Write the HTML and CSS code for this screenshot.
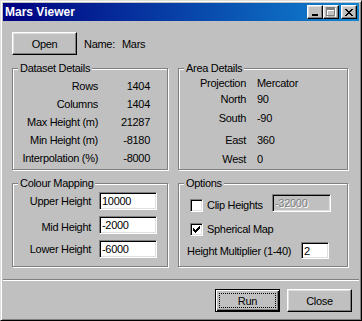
FILE: index.html
```html
<!DOCTYPE html>
<html lang="en">
<head>
  <meta charset="UTF-8">
  <title>Mars Viewer</title>
  <link rel="stylesheet" href="styles.css">
</head>
<body>

  <div class="window">

    <!-- Title bar -->
    <div class="titlebar">
      <span class="title">Mars Viewer</span>
      <div class="caption-buttons">
        <span class="cap-btn">
          <svg width="8" height="7" viewBox="0 0 8 7" shape-rendering="crispEdges"><rect x="1" y="5" width="6" height="2" fill="#000"/></svg>
        </span>
        <span class="cap-btn">
          <svg width="10" height="10" viewBox="0 0 10 10" shape-rendering="crispEdges">
            <path d="M1 1h9v10h-9z M2 4v6h7v-6z" fill="#fff" fill-rule="evenodd"/>
            <path d="M0 0h9v9h-9z M1 3v5h7v-5z" fill="#808080" fill-rule="evenodd"/>
          </svg>
        </span>
        <span class="cap-btn close">
          <svg width="8" height="7" viewBox="0 0 8 7" shape-rendering="crispEdges">
            <path d="M0 0h2v1h-2z M6 0h2v1h-2z M1 1h2v1h-2z M5 1h2v1h-2z M2 2h4v1h-4z M3 3h2v1h-2z M2 4h4v1h-4z M1 5h2v1h-2z M5 5h2v1h-2z M0 6h2v1h-2z M6 6h2v1h-2z" fill="#000"/>
          </svg>
        </span>
      </div>
    </div>

    <div class="content">

      <!-- Open / name -->
      <div class="top-row">
        <button class="btn">Open</button>
        <span class="name-label">Name:</span>
        <span>Mars</span>
      </div>

      <!-- Group boxes -->
      <div class="groups">
        <fieldset class="group tall">
          <legend>Dataset Details</legend>
          <div class="stats">
            <span>Rows</span><span>1404</span>
            <span>Columns</span><span>1404</span>
            <span>Max Height (m)</span><span>21287</span>
            <span>Min Height (m)</span><span>-8180</span>
            <span>Interpolation (%)</span><span>-8000</span>
          </div>
        </fieldset>

        <fieldset class="group tall">
          <legend>Area Details</legend>
          <div class="area">
            <span>Projection</span><span>Mercator</span>
            <span>North</span><span>90</span>
            <span>South</span><span>-90</span>
            <span>East</span><span>360</span>
            <span>West</span><span>0</span>
          </div>
        </fieldset>

        <fieldset class="group short">
          <legend>Colour Mapping</legend>
          <div class="mapping">
            <label>Upper Height</label><input class="edit" type="text" value="10000">
            <label class="mid">Mid Height</label><input class="edit" type="text" value="-2000">
            <label>Lower Height</label><input class="edit" type="text" value="-6000">
          </div>
        </fieldset>

        <fieldset class="group short">
          <legend>Options</legend>
          <div class="options">
            <div class="opt-row clip">
              <span class="check"></span>
              <span class="check-label">Clip Heights</span>
              <input class="edit clip-value" type="text" value="-32000" disabled>
            </div>
            <div class="opt-row spherical">
              <span class="check">
                <svg width="7" height="7" viewBox="0 0 7 7" shape-rendering="crispEdges">
                  <path d="M6 0h1v1h-1z M5 1h2v1h-2z M0 2h1v1h-1z M4 2h3v1h-3z M0 3h2v1h-2z M3 3h3v1h-3z M0 4h5v1h-5z M1 5h3v1h-3z M2 6h1v1h-1z" fill="#000"/>
                </svg>
              </span>
              <span class="check-label">Spherical Map</span>
            </div>
            <div class="opt-row multiplier">
              <span class="mult-label">Height Multiplier (1-40)</span>
              <input class="edit mult" type="text" value="2">
            </div>
          </div>
        </fieldset>
      </div>

      <div class="separator"></div>

      <!-- Dialog buttons -->
      <div class="actions">
        <button class="btn default"><span class="focus">Run</span></button>
        <button class="btn">Close</button>
      </div>

    </div>
  </div>

</body>
</html>
```

FILE: styles.css
```css
body {
  margin: 0;
  font-family: 'Liberation Sans', Arial, sans-serif;
  font-size: 11px;
  letter-spacing: -0.3px;
  background-color: #c0c0c0;
  color: #000;
}

.window {
  width: 362px;
  height: 321px;
  box-sizing: border-box;
  padding: 2px;
  border: 1px solid;
  border-color: #dfdfdf #000 #000 #dfdfdf;
  box-shadow: inset 1px 1px #fff, inset -1px -1px #808080;
  background-color: #c0c0c0;
}

/* title bar */

.titlebar {
  height: 18px;
  display: flex;
  align-items: center;
  justify-content: space-between;
  padding: 0 2px;
  background: linear-gradient(to right, #000080, #1084d0);
}

.title {
  color: #fff;
  font-weight: bold;
  font-size: 12px;
  letter-spacing: 0;
}

.caption-buttons {
  display: flex;
}

.cap-btn {
  width: 16px;
  height: 14px;
  box-sizing: border-box;
  display: flex;
  align-items: center;
  justify-content: center;
  background-color: #c0c0c0;
  border: 1px solid;
  border-color: #fff #000 #000 #fff;
  box-shadow: inset -1px -1px #808080, inset 1px 1px #dfdfdf;
}

.cap-btn svg {
  display: block;
}

.cap-btn.close {
  margin-left: 2px;
}

/* content */

.content {
  padding: 0 0 0 9px;
}

.top-row {
  display: flex;
  align-items: center;
  margin-top: 11px;
  height: 23px;
}

.btn {
  width: 65px;
  height: 23px;
  box-sizing: border-box;
  padding: 0;
  font-family: inherit;
  font-size: 11px;
  letter-spacing: inherit;
  color: #000;
  background-color: #c0c0c0;
  border: 1px solid;
  border-color: #fff #000 #000 #fff;
  box-shadow: inset -1px -1px #808080, inset 1px 1px #dfdfdf;
}

.btn.default {
  border-color: #000;
  box-shadow: inset 1px 1px #fff, inset -1px -1px #000, inset -2px -2px #808080;
  padding: 3px;
}

.btn .focus {
  display: flex;
  align-items: center;
  justify-content: center;
  height: 100%;
  box-sizing: border-box;
  border: 1px dotted #000;
}

.name-label {
  margin-left: 7px;
  width: 38px;
}

/* group boxes */

.groups {
  display: grid;
  grid-template-columns: 156px 170px;
  column-gap: 10px;
  row-gap: 7px;
  margin-top: 7px;
}

.group {
  margin: 0;
  padding: 0;
  min-width: 0;
  box-sizing: border-box;
  border: 1px solid #808080;
  box-shadow: inset 1px 1px #fff, 1px 1px #fff;
}

.group.tall {
  height: 108px;
}

.group.short {
  height: 90px;
}

.group legend {
  margin-left: 5px;
  padding: 0 2px;
  line-height: 13px;
  background-color: #c0c0c0;
}

.stats {
  display: grid;
  grid-template-columns: 85px 52px;
  grid-auto-rows: 18px;
  align-items: center;
  text-align: right;
  padding-top: 2px;
}

.area {
  display: grid;
  grid-template-columns: 67px auto;
  grid-template-rows: 16px 15px 24px 20px 18px;
  column-gap: 11px;
  align-items: center;
}

.area span:nth-child(odd) {
  text-align: right;
}

.mapping {
  display: grid;
  grid-template-columns: 78px 58px;
  grid-auto-rows: 18px;
  column-gap: 8px;
  row-gap: 6px;
  align-items: center;
  padding-top: 2px;
}

.mapping label {
  text-align: right;
}

.mapping label.mid {
  padding-top: 4px;
}

.edit {
  height: 18px;
  box-sizing: border-box;
  margin: 0;
  padding: 0 0 0 2px;
  font-family: inherit;
  font-size: 11px;
  letter-spacing: inherit;
  color: #000;
  background-color: #fff;
  border: 1px solid;
  border-color: #808080 #fff #fff #808080;
  box-shadow: inset 1px 1px #000, inset -1px -1px #dfdfdf;
  outline: none;
}

.mapping .edit {
  width: 58px;
}

/* options */

.options {
  padding-top: 4px;
  padding-left: 11px;
}

.opt-row {
  display: flex;
  align-items: center;
}

.opt-row.clip {
  align-items: flex-end;
  height: 18px;
}

.opt-row.spherical {
  margin-top: 11px;
}

.opt-row.multiplier {
  margin-top: 6px;
  margin-left: -3px;
}

.check {
  width: 13px;
  height: 13px;
  box-sizing: border-box;
  padding: 2px;
  background-color: #fff;
  border: 1px solid;
  border-color: #808080 #fff #fff #808080;
  box-shadow: inset 1px 1px #000, inset -1px -1px #dfdfdf;
}

.check svg {
  display: block;
}

.check-label {
  margin-left: 4px;
  line-height: 13px;
}

.clip .check-label {
  width: 65px;
}

.clip-value {
  width: 59px;
  color: #808080;
  background-color: #c0c0c0;
  text-shadow: 1px 1px #fff;
}

.mult-label {
  width: 114px;
}

.edit.mult {
  width: 28px;
  height: 17px;
}

/* bottom */

.separator {
  margin: 12px 0 0 -9px;
  border-top: 1px solid #808080;
  border-bottom: 1px solid #fff;
}

.actions {
  display: flex;
  justify-content: flex-end;
  gap: 7px;
  margin-top: 8px;
  padding-right: 7px;
}
```
